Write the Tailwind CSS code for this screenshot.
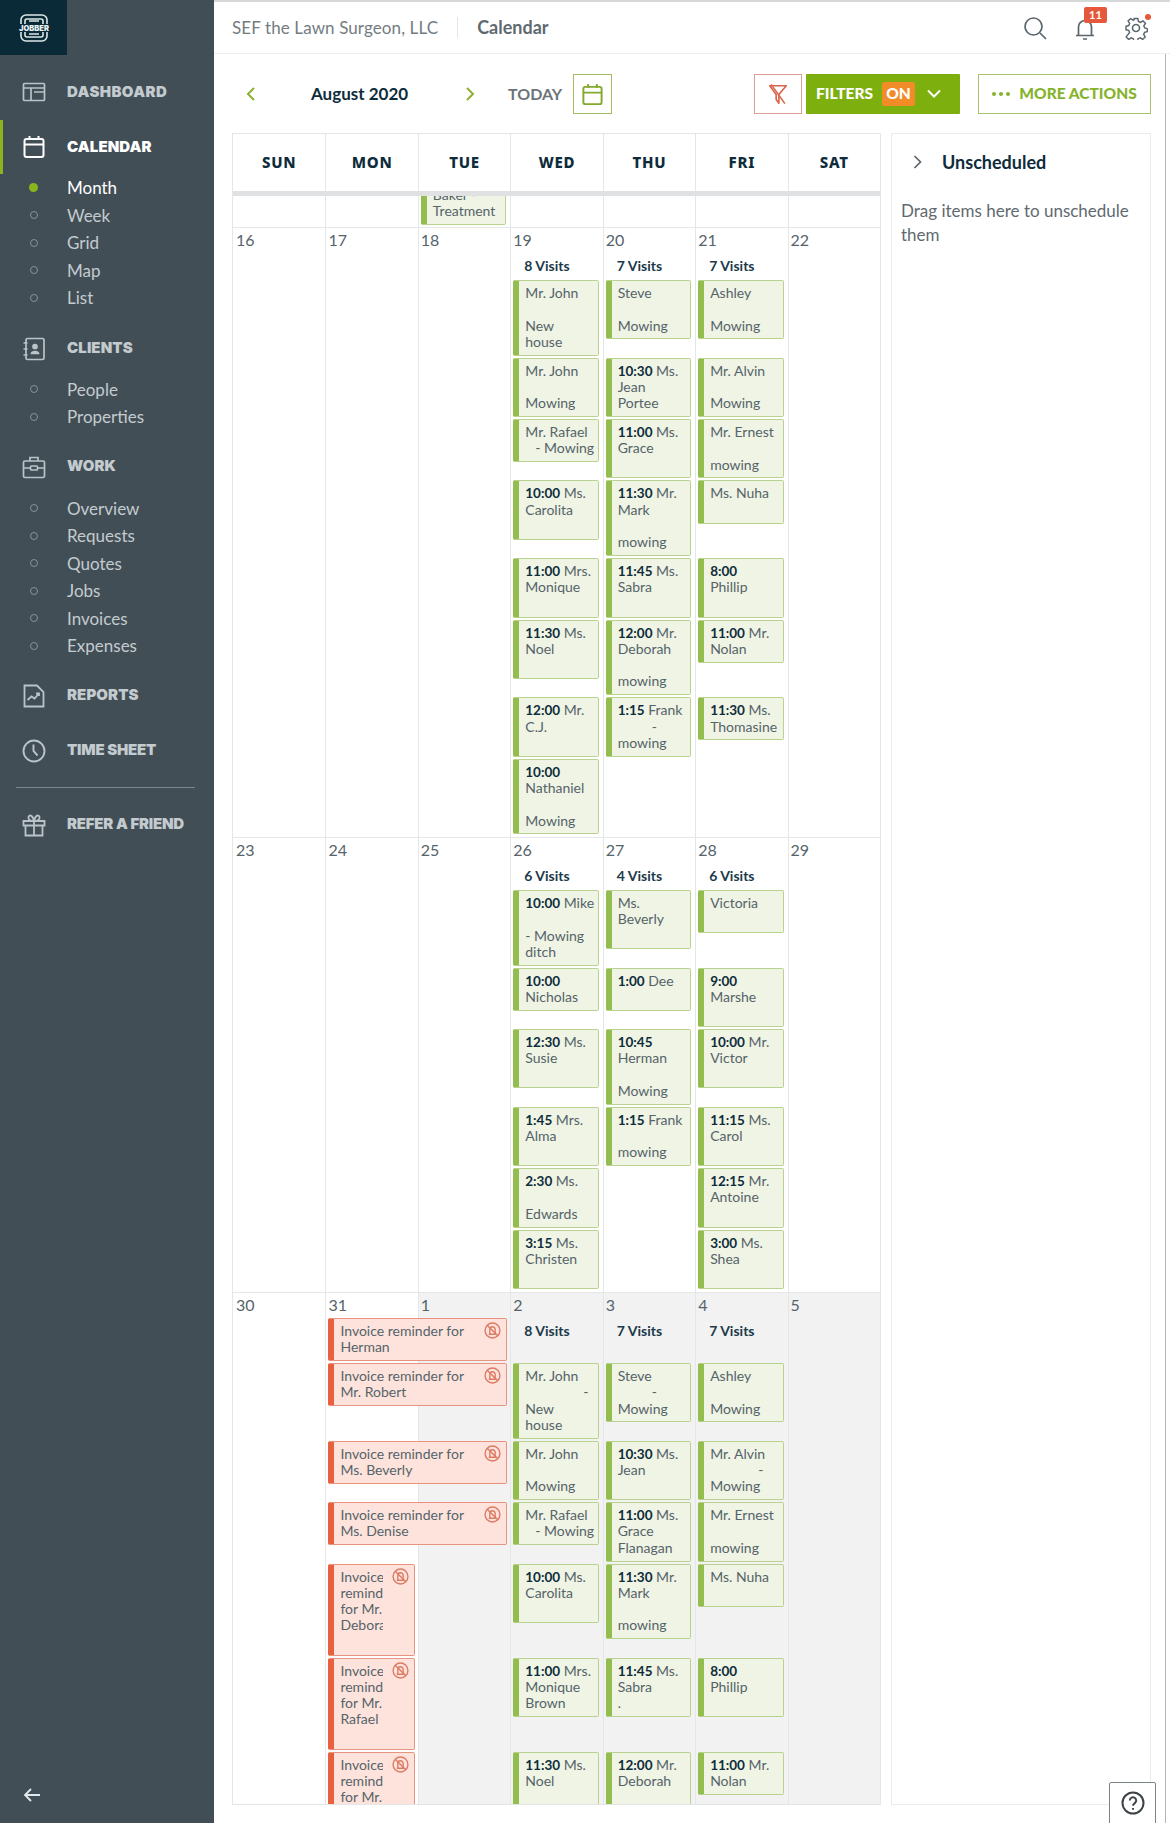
<!DOCTYPE html>
<html lang="en">
<head>
    <meta charset="UTF-8">
    <title>Calendar - SEF the Lawn Surgeon, LLC</title>
    <script src="https://cdn.jsdelivr.net/npm/@tailwindcss/browser@4"></script>
</head>
<body class="bg-white">
<div class="relative flex w-[1170px] h-[1823px] overflow-hidden font-['Lato','Noto_Sans',sans-serif] text-[#56636a]">

    <!-- Sidebar -->
    <aside class="relative flex flex-col w-[214px] shrink-0 bg-[#424e56] text-[#c3cbcf]">
        <div class="flex items-center justify-center w-[67px] h-[55px] bg-[#0b2a38]">
            <svg class="w-[32px] h-[30px]" viewBox="0 0 32 30" fill="none" stroke="#dbe8e8" stroke-width="1.6">
                <path d="M3 11V7a5 5 0 0 1 5-5h16a5 5 0 0 1 5 5v4"/>
                <path d="M7 11V8a2 2 0 0 1 2-2h14a2 2 0 0 1 2 2v3M11 8h10"/>
                <path d="M3 19v4a5 5 0 0 0 5 5h16a5 5 0 0 0 5-5v-4"/>
                <path d="M7 19v3a2 2 0 0 0 2 2h14a2 2 0 0 0 2-2v-3M11 21h10"/>
                <text x="16" y="18" text-anchor="middle" font-size="7.5" font-weight="900" fill="#eaf2f2" stroke="none" font-family="Inter">JOBBER</text>
            </svg>
        </div>
        <span class="absolute left-0 top-[120px] w-[3px] h-[54px] bg-[#8ab51e]"></span>
        <nav class="pt-[23px]">
            <a class="flex items-center h-[28px] text-[15px] font-black font-['Inter'] tracking-[0.4px]">
                <span class="flex justify-center w-[67px]"><svg class="w-[24px] h-[24px]" viewBox="0 0 24 24" fill="none" stroke="#b9c3c8" stroke-width="1.7"><rect x="1.5" y="3.5" width="21" height="17" rx="1"/><path d="M1.5 8h21M9 8v12.5M12 12h10.5"/></svg></span>DASHBOARD
            </a>
            <a class="flex items-center h-[28px] mt-[27px] text-[15px] font-black font-['Inter'] tracking-[0.1px] text-white">
                <span class="flex justify-center w-[67px]"><svg class="w-[24px] h-[24px]" viewBox="0 0 24 24" fill="none" stroke="#ffffff" stroke-width="2"><rect x="2.5" y="4" width="19" height="18" rx="2"/><path d="M2.5 9.5h19M7.5 1v4M16.5 1v4"/></svg></span>CALENDAR
            </a>
            <ul class="mt-[13px] text-[17px]">
                <li class="flex items-center h-[27.5px] text-white"><span class="flex justify-center w-[67px]"><span class="w-[9px] h-[9px] rounded-full bg-[#8ab51e]"></span></span>Month</li>
                <li class="flex items-center h-[27.5px]"><span class="flex justify-center w-[67px]"><span class="w-[8px] h-[8px] rounded-full border-[1.5px] border-[#87939a]"></span></span>Week</li>
                <li class="flex items-center h-[27.5px]"><span class="flex justify-center w-[67px]"><span class="w-[8px] h-[8px] rounded-full border-[1.5px] border-[#87939a]"></span></span>Grid</li>
                <li class="flex items-center h-[27.5px]"><span class="flex justify-center w-[67px]"><span class="w-[8px] h-[8px] rounded-full border-[1.5px] border-[#87939a]"></span></span>Map</li>
                <li class="flex items-center h-[27.5px]"><span class="flex justify-center w-[67px]"><span class="w-[8px] h-[8px] rounded-full border-[1.5px] border-[#87939a]"></span></span>List</li>
            </ul>
            <a class="flex items-center h-[28px] mt-[23px] text-[15px] font-black font-['Inter'] tracking-[0.1px]">
                <span class="flex justify-center w-[67px]"><svg class="w-[24px] h-[24px]" viewBox="0 0 24 24" fill="none" stroke="#b9c3c8" stroke-width="1.7"><rect x="4" y="1.5" width="18" height="21" rx="1.5"/><path d="M1.5 6h4M1.5 12h4M1.5 18h4"/><circle cx="13" cy="9.5" r="2" fill="#b9c3c8"/><path d="M9.5 16.5c.5-2.5 6.500-2.500 7 0z" fill="#b9c3c8"/></svg></span>CLIENTS
            </a>
            <ul class="mt-[13px] text-[17px]">
                <li class="flex items-center h-[27.5px]"><span class="flex justify-center w-[67px]"><span class="w-[8px] h-[8px] rounded-full border-[1.5px] border-[#87939a]"></span></span>People</li>
                <li class="flex items-center h-[27.5px]"><span class="flex justify-center w-[67px]"><span class="w-[8px] h-[8px] rounded-full border-[1.5px] border-[#87939a]"></span></span>Properties</li>
            </ul>
            <a class="flex items-center h-[28px] mt-[22px] text-[15px] font-black font-['Inter'] tracking-[0.1px]">
                <span class="flex justify-center w-[67px]"><svg class="w-[24px] h-[24px]" viewBox="0 0 24 24" fill="none" stroke="#b9c3c8" stroke-width="1.7"><rect x="1.500" y="6" width="21" height="16.500" rx="1.500"/><path d="M8 6V2.500h8V6M1.500 13h7M15.500 13h7"/><rect x="8.500" y="11" width="7" height="4" rx="1"/></svg></span>WORK
            </a>
            <ul class="mt-[14px] text-[17px]">
                <li class="flex items-center h-[27.5px]"><span class="flex justify-center w-[67px]"><span class="w-[8px] h-[8px] rounded-full border-[1.5px] border-[#87939a]"></span></span>Overview</li>
                <li class="flex items-center h-[27.5px]"><span class="flex justify-center w-[67px]"><span class="w-[8px] h-[8px] rounded-full border-[1.5px] border-[#87939a]"></span></span>Requests</li>
                <li class="flex items-center h-[27.5px]"><span class="flex justify-center w-[67px]"><span class="w-[8px] h-[8px] rounded-full border-[1.5px] border-[#87939a]"></span></span>Quotes</li>
                <li class="flex items-center h-[27.5px]"><span class="flex justify-center w-[67px]"><span class="w-[8px] h-[8px] rounded-full border-[1.5px] border-[#87939a]"></span></span>Jobs</li>
                <li class="flex items-center h-[27.5px]"><span class="flex justify-center w-[67px]"><span class="w-[8px] h-[8px] rounded-full border-[1.5px] border-[#87939a]"></span></span>Invoices</li>
                <li class="flex items-center h-[27.5px]"><span class="flex justify-center w-[67px]"><span class="w-[8px] h-[8px] rounded-full border-[1.5px] border-[#87939a]"></span></span>Expenses</li>
            </ul>
            <a class="flex items-center h-[28px] mt-[22px] text-[15px] font-black font-['Inter'] tracking-[0.1px]">
                <span class="flex justify-center w-[67px]"><svg class="w-[24px] h-[24px]" viewBox="0 0 24 24" fill="none" stroke="#b9c3c8" stroke-width="1.8"><path d="M2.500 1.500H15l6.500 6.500v14.500h-19z"/><path d="M5.500 16l4-3.500 3 2 4.500-5M14 9.500h3V12"/></svg></span>REPORTS
            </a>
            <a class="flex items-center h-[28px] mt-[27px] text-[15px] font-black font-['Inter'] tracking-[-0.2px]">
                <span class="flex justify-center w-[67px]"><svg class="w-[24px] h-[24px]" viewBox="0 0 24 24" fill="none" stroke="#b9c3c8" stroke-width="1.9"><circle cx="12" cy="12" r="10.500"/><path d="M11.500 5.500V12l4 4.500"/></svg></span>TIME SHEET
            </a>
            <div class="mt-[22px] ml-[16px] w-[179px] border-t border-[#7b878d]"></div>
            <a class="flex items-center h-[28px] mt-[23px] text-[15px] font-black font-['Inter'] tracking-[-0.2px]">
                <span class="flex justify-center w-[67px]"><svg class="w-[24px] h-[24px]" viewBox="0 0 24 24" fill="none" stroke="#b9c3c8" stroke-width="1.800"><path d="M1.500 8h21v4.500h-21zM3.500 12.500h17v10h-17zM12 8v14.500"/><path d="M12 8C8 8 6 6.500 6.500 4s4-2.500 5.500 4c1.500-6.500 5-6.500 5.500-4S16 8 12 8z"/></svg></span>REFER A FRIEND
            </a>
        </nav>
        <svg class="absolute left-[23px] bottom-[19px] w-[18px] h-[18px]" viewBox="0 0 18 18" fill="none" stroke="#e3e8ea" stroke-width="1.800"><path d="M17 9H2M8 3L2 9l6 6"/></svg>
    </aside>

    <!-- Main column -->
    <main class="flex flex-col flex-1 min-w-0 border-t-[2px] border-t-[#d5d7d8]">
        <header class="flex items-center shrink-0 h-[52px] pl-[18px] border-b-[1.5px] border-[#eceff0]">
            <span class="text-[17px] tracking-[0.1px] text-[#737c81]">SEF the Lawn Surgeon, LLC</span>
            <span class="mx-[19px] h-[21px] border-l border-[#e3e6e8]"></span>
            <span class="text-[18px] font-bold text-[#5f6a70]">Calendar</span>
            <div class="ml-auto flex items-center pr-[22px]">
                <svg class="w-[24px] h-[24px] mr-[26px]" viewBox="0 0 24 24" fill="none" stroke="#59656b" stroke-width="1.700"><circle cx="10.500" cy="10.500" r="8.500"/><path d="M17 17l6 6"/></svg>
                <span class="relative mr-[27px] mt-[2px]">
                    <svg class="w-[24px] h-[24px]" viewBox="0 0 24 24" fill="none" stroke="#59656b" stroke-width="1.700"><path d="M5.500 18V10a6.500 6.500 0 0 1 13 0v8M3 18.500h18M10 22h4"/></svg>
                    <span class="absolute left-[11px] top-[-10px] flex items-center justify-center w-[23px] h-[16px] rounded-[2px] bg-[#e5593a] text-white text-[11px] font-bold leading-none">11</span>
                </span>
                <span class="relative">
                    <svg class="w-[24px] h-[24px]" viewBox="0 0 24 24" fill="none" stroke="#59656b" stroke-width="1.600"><circle cx="12" cy="12" r="3.500"/><path d="M10 1.500h4l.7 3.200 2.300 1 2.800-1.700 2.700 2.900-1.800 2.700 1 2.400 3 .7v-.2l-.2 3.700-3 .7-1 2.300 1.700 2.800-2.800 2.700-2.700-1.800-2.400 1-.6 3h-4l-.7-3-2.300-1-2.800 1.800-2.800-2.800L4.900 17l-1-2.400-3-.6v-4l3-.7 1-2.300L3.200 4.200 6 1.500l2.800 1.800 1-.5z" transform="translate(1.200 1.200) scale(.9)"/></svg>
                    <span class="absolute right-[-3px] top-[-2px] w-[6px] h-[6px] rounded-full bg-[#e5593a]"></span>
                </span>
            </div>
        </header>

        <div class="flex flex-col flex-1 min-h-0 mr-[4px] pl-[18px] pr-[14px] border-r border-[#b3b6b8]">
            <!-- Toolbar -->
            <div class="flex items-center shrink-0 h-[40px] mt-[20px]">
                <svg class="ml-[14px] w-[10px] h-[14px]" viewBox="0 0 10 14" fill="none" stroke="#8eb02f" stroke-width="2"><path d="M8 1L2 7l6 6"/></svg>
                <span class="ml-[55px] w-[99px] text-[17px] font-bold text-[#0e2c3b] whitespace-nowrap">August 2020</span>
                <svg class="ml-[55px] w-[10px] h-[14px]" viewBox="0 0 10 14" fill="none" stroke="#8eb02f" stroke-width="2"><path d="M2 1l6 6-6 6"/></svg>
                <span class="ml-[33px] w-[55px] text-[16px] font-bold text-[#6b7478]">TODAY</span>
                <button class="ml-[10px] flex items-center justify-center w-[39px] h-[40px] border border-[#a3bd62]">
                    <svg class="w-[23px] h-[23px]" viewBox="0 0 24 24" fill="none" stroke="#82a92c" stroke-width="2"><rect x="2.500" y="4" width="19" height="18" rx="2"/><path d="M2.500 10h19M7.500 1v4M16.500 1v4"/></svg>
                </button>
                <button class="ml-auto flex items-center justify-center w-[48px] h-[40px] border border-[#dc9f93]">
                    <svg class="w-[22px] h-[22px]" viewBox="0 0 24 24" fill="none" stroke="#d9664d" stroke-width="1.800"><path d="M3 3h18l-8 9.500V22l-3-4v-5.500z" stroke-linejoin="round"/><path d="M4.500 1.500l15 21"/></svg>
                </button>
                <button class="ml-[4px] flex items-center w-[154px] h-[40px] pl-[10px] rounded-[1px] bg-[#7db00e] text-white text-[15.5px] font-black">
                    FILTERS
                    <span class="flex items-center justify-center ml-[9px] w-[33px] h-[24px] rounded-[2px] bg-[#f28c28]">ON</span>
                    <svg class="ml-[12px] w-[14px] h-[10px]" viewBox="0 0 14 10" fill="none" stroke="#ffffff" stroke-width="2"><path d="M1 1.500l6 6 6-6"/></svg>
                </button>
                <button class="ml-[18px] flex items-center justify-center w-[173px] h-[40px] border border-[#a9c26d] text-[15.5px] font-black text-[#86b32e]">
                    <span class="flex gap-[3px] mr-[9px]"><span class="w-[4px] h-[4px] rounded-full bg-[#86b32e]"></span><span class="w-[4px] h-[4px] rounded-full bg-[#86b32e]"></span><span class="w-[4px] h-[4px] rounded-full bg-[#86b32e]"></span></span>
                    MORE ACTIONS
                </button>
            </div>

            <!-- Calendar and unscheduled panel -->
            <div class="flex flex-1 min-h-0 gap-[10px] mt-[19px] mb-[18px]">
                <section class="flex flex-col w-[649px] shrink-0 border border-[#e4e7e8] overflow-hidden">
                    <div class="grid grid-cols-7 shrink-0 h-[57px] font-['Noto_Sans'] text-[15px] font-extrabold tracking-[0.8px] text-[#0e2c3b]">
                        <div class="flex items-center justify-center">SUN</div>
                        <div class="flex items-center justify-center border-l border-[#e4e7e8]">MON</div>
                        <div class="flex items-center justify-center border-l border-[#e4e7e8]">TUE</div>
                        <div class="flex items-center justify-center border-l border-[#e4e7e8]">WED</div>
                        <div class="flex items-center justify-center border-l border-[#e4e7e8]">THU</div>
                        <div class="flex items-center justify-center border-l border-[#e4e7e8]">FRI</div>
                        <div class="flex items-center justify-center border-l border-[#e4e7e8]">SAT</div>
                    </div>
                    <div class="shrink-0 h-[5px] bg-[#dfe1e2]"></div>
                    <div id="weeks" class="flex flex-col flex-1 min-h-0"></div>
                </section>

                <section class="w-[260px] shrink-0 border border-[#e9ebec]">
                    <div class="flex items-center h-[56px] pl-[21px]">
                        <svg class="w-[9px] h-[14px]" viewBox="0 0 9 14" fill="none" stroke="#59656b" stroke-width="1.700"><path d="M1.500 1l6 6-6 6"/></svg>
                        <span class="ml-[20px] text-[18px] font-bold text-[#0e2c3b]">Unscheduled</span>
                    </div>
                    <p class="pl-[9px] mt-[9px] text-[17px] leading-[24px] text-[#5f6a70]">Drag items here to unschedule them</p>
                </section>
            </div>
        </div>
    </main>

    <!-- Help button -->
    <button class="absolute left-[1109px] top-[1782px] flex justify-center w-[47px] h-[50px] pt-[8px] rounded-t-[2px] border border-[#7d8488] bg-white">
        <svg class="w-[24px] h-[24px]" viewBox="0 0 24 24" fill="none" stroke="#3d4448" stroke-width="2"><circle cx="12" cy="12" r="10.500"/><path d="M8.800 9.500a3.200 3.200 0 1 1 5 2.600c-1.200.8-1.800 1.300-1.800 2.700"/><path d="M12 17v1.800"/></svg>
    </button>
</div>

<script>
    const visitBox = 'relative ml-[3px] mr-[4px] mb-[2px] pt-[4px] pb-[4.5px] pl-[6px] border border-[#b9d28f] border-l-[6px] border-l-[#94bd4f] rounded-[2px] bg-[#eff4e4] text-[14px] leading-[16.3px] overflow-hidden whitespace-nowrap';
    const invoiceBox = 'relative ml-[3px] mr-[3px] mb-[2px] pt-[4px] pb-[4.5px] pl-[6px] border border-[#e7937f] border-l-[6px] border-l-[#e8613e] rounded-[2px] bg-[#fde3dc] text-[14px] leading-[16.3px] overflow-hidden whitespace-nowrap';
    const noBell = '<svg class="absolute right-[5px] top-[3px] w-[17px] h-[17px]" viewBox="0 0 16 16" fill="none" stroke="#dd7a63" stroke-width="1.300"><circle cx="8" cy="8" r="7"/><path d="M3 3l10 10"/><path d="M5.500 11V7a2.500 2.500 0 0 1 5 0v4M4.500 11.500h7"/></svg>';

    // lines are split on |, an empty line stays blank like the hidden customer names
    function lines(text) {
        return text.split('|').map(l => `<div class="h-[16.3px]">${l || '&nbsp;'}</div>`).join('');
    }
    function visit(text) {
        return text ? `<div class="${visitBox}">${lines(text)}</div>` : '';
    }
    function invoice(text, narrow) {
        const inner = narrow ? `<div class="w-[43px] overflow-hidden">${lines(text)}</div>` : lines(text);
        return `<div class="${invoiceBox}">${inner}${noBell}</div>`;
    }
    function visitCount(n) {
        return `<div class="pt-[5px] pl-[14px] h-[27px] text-[14px] leading-[16px] font-bold text-[#1c3a4a]">${n} Visits</div>`;
    }
    function dayRow(days) {
        return days.map(d => `<div class="h-[25px] pl-[3px] pt-[2px] text-[16px] leading-[20px] text-[#56636a]">${d}</div>`).join('');
    }
    // mon column + wed, thu, fri columns, the other days stay empty
    function row(wed, thu, fri, mon = '', span = false) {
        const monCell = `<div class="${span ? 'col-span-2' : ''}">${mon}</div>`;
        return `<div></div>${monCell}${span ? '' : '<div></div>'}<div>${visit(wed)}</div><div>${visit(thu)}</div><div>${visit(fri)}</div><div></div>`;
    }
    function background(grayFrom) {
        let cells = '';
        for (let i = 0; i < 7; i++) {
            const border = i > 0 ? 'border-l border-[#e4e7e8]' : '';
            cells += `<div class="${border} ${i >= grayFrom ? 'bg-[#f2f2f2]' : ''}"></div>`;
        }
        return `<div class="absolute inset-0 grid grid-cols-7">${cells}</div>`;
    }
    // bold start times in the visit cards
    const t = s => `<b class="text-[13.5px] text-[#0e2c3b]">${s}</b>`;

    const week16 = [
        ['Mr. John||New|house', 'Steve||Mowing', 'Ashley||Mowing'],
        ['Mr. John||Mowing', t('10:30') + ' Ms.|Jean|Portee', 'Mr. Alvin||Mowing'],
        ['Mr. Rafael|<span class="ml-[10px]">- Mowing</span>', t('11:00') + ' Ms.|Grace|', 'Mr. Ernest||mowing'],
        [t('10:00') + ' Ms.|Carolita|', t('11:30') + ' Mr.|Mark||mowing', 'Ms. Nuha|'],
        [t('11:00') + ' Mrs.|Monique|', t('11:45') + ' Ms.|Sabra|', t('8:00') + '|Phillip|'],
        [t('11:30') + ' Ms.|Noel|', t('12:00') + ' Mr.|Deborah||mowing', t('11:00') + ' Mr.|Nolan'],
        [t('12:00') + ' Mr.|C.J.|', t('1:15') + ' Frank|<span class="ml-[34px]">-</span>|mowing', t('11:30') + ' Ms.|Thomasine'],
        [t('10:00') + '|Nathaniel||Mowing', '', '']
    ];
    const week23 = [
        [t('10:00') + ' Mike||- Mowing|ditch', 'Ms.|Beverly|', 'Victoria|'],
        [t('10:00') + '|Nicholas', t('1:00') + ' Dee|', t('9:00') + '|Marshe|'],
        [t('12:30') + ' Ms.|Susie|', t('10:45') + '|Herman||Mowing', t('10:00') + ' Mr.|Victor|'],
        [t('1:45') + ' Mrs.|Alma|', t('1:15') + ' Frank||mowing', t('11:15') + ' Ms.|Carol|'],
        [t('2:30') + ' Ms.||Edwards', '', t('12:15') + ' Mr.|Antoine|'],
        [t('3:15') + ' Ms.|Christen|', '', t('3:00') + ' Ms.|Shea|']
    ];
    const week30 = [
        ['Mr. John|<span class="ml-[58px]">-</span>|New|house', 'Steve|<span class="ml-[34px]">-</span>|Mowing', 'Ashley||Mowing', invoice('Invoice reminder for|Mr. Robert'), true],
        ['Mr. John||Mowing', t('10:30') + ' Ms.|Jean|', 'Mr. Alvin|<span class="ml-[48px]">-</span>|Mowing', invoice('Invoice reminder for|Ms. Beverly'), true],
        ['Mr. Rafael|<span class="ml-[10px]">- Mowing</span>', t('11:00') + ' Ms.|Grace|Flanagan', 'Mr. Ernest||mowing', invoice('Invoice reminder for|Ms. Denise'), true],
        [t('10:00') + ' Ms.|Carolita|', t('11:30') + ' Mr.|Mark||mowing', 'Ms. Nuha|', invoice('Invoice|reminder|for Mr.|Deborah|', true)],
        [t('11:00') + ' Mrs.|Monique|Brown', t('11:45') + ' Ms.|Sabra|.', t('8:00') + '|Phillip|', invoice('Invoice|reminder|for Mr.|Rafael|', true)],
        [t('11:30') + ' Ms.|Noel|', t('12:00') + ' Mr.|Deborah|', t('11:00') + ' Mr.|Nolan', invoice('Invoice|reminder|for Mr.|Robert|', true)]
    ];

    let html = '';

    // tail of the week before, scrolled under the header
    html += `<div class="relative shrink-0 h-[32px] overflow-hidden border-b border-[#e4e7e8]">${background(9)}
        <div class="relative grid grid-cols-7 grid-rows-[31px]"><div></div><div></div><div class="self-end">${visit('Baker -|Treatment')}</div></div></div>`;

    html += `<div class="relative shrink-0 h-[610px] border-b border-[#e4e7e8]">${background(9)}
        <div class="relative grid grid-cols-7 items-start">${dayRow([16, 17, 18, 19, 20, 21, 22])}
        <div></div><div></div><div></div>${visitCount(8)}${visitCount(7)}${visitCount(7)}<div></div>
        ${week16.map(r => row(...r)).join('')}</div></div>`;

    html += `<div class="relative shrink-0 h-[455px] border-b border-[#e4e7e8]">${background(9)}
        <div class="relative grid grid-cols-7 items-start">${dayRow([23, 24, 25, 26, 27, 28, 29])}
        <div></div><div></div><div></div>${visitCount(6)}${visitCount(4)}${visitCount(6)}<div></div>
        ${week23.map(r => row(...r)).join('')}</div></div>`;

    html += `<div class="relative flex-1 min-h-0 overflow-hidden">${background(2)}
        <div class="relative grid grid-cols-7 items-start">${dayRow([30, 31, 1, 2, 3, 4, 5])}
        <div></div><div class="col-span-2">${invoice('Invoice reminder for|Herman')}</div>${visitCount(8)}${visitCount(7)}${visitCount(7)}<div></div>
        ${week30.map(r => row(...r)).join('')}</div></div>`;

    document.getElementById('weeks').innerHTML = html;
</script>
</body>
</html>
